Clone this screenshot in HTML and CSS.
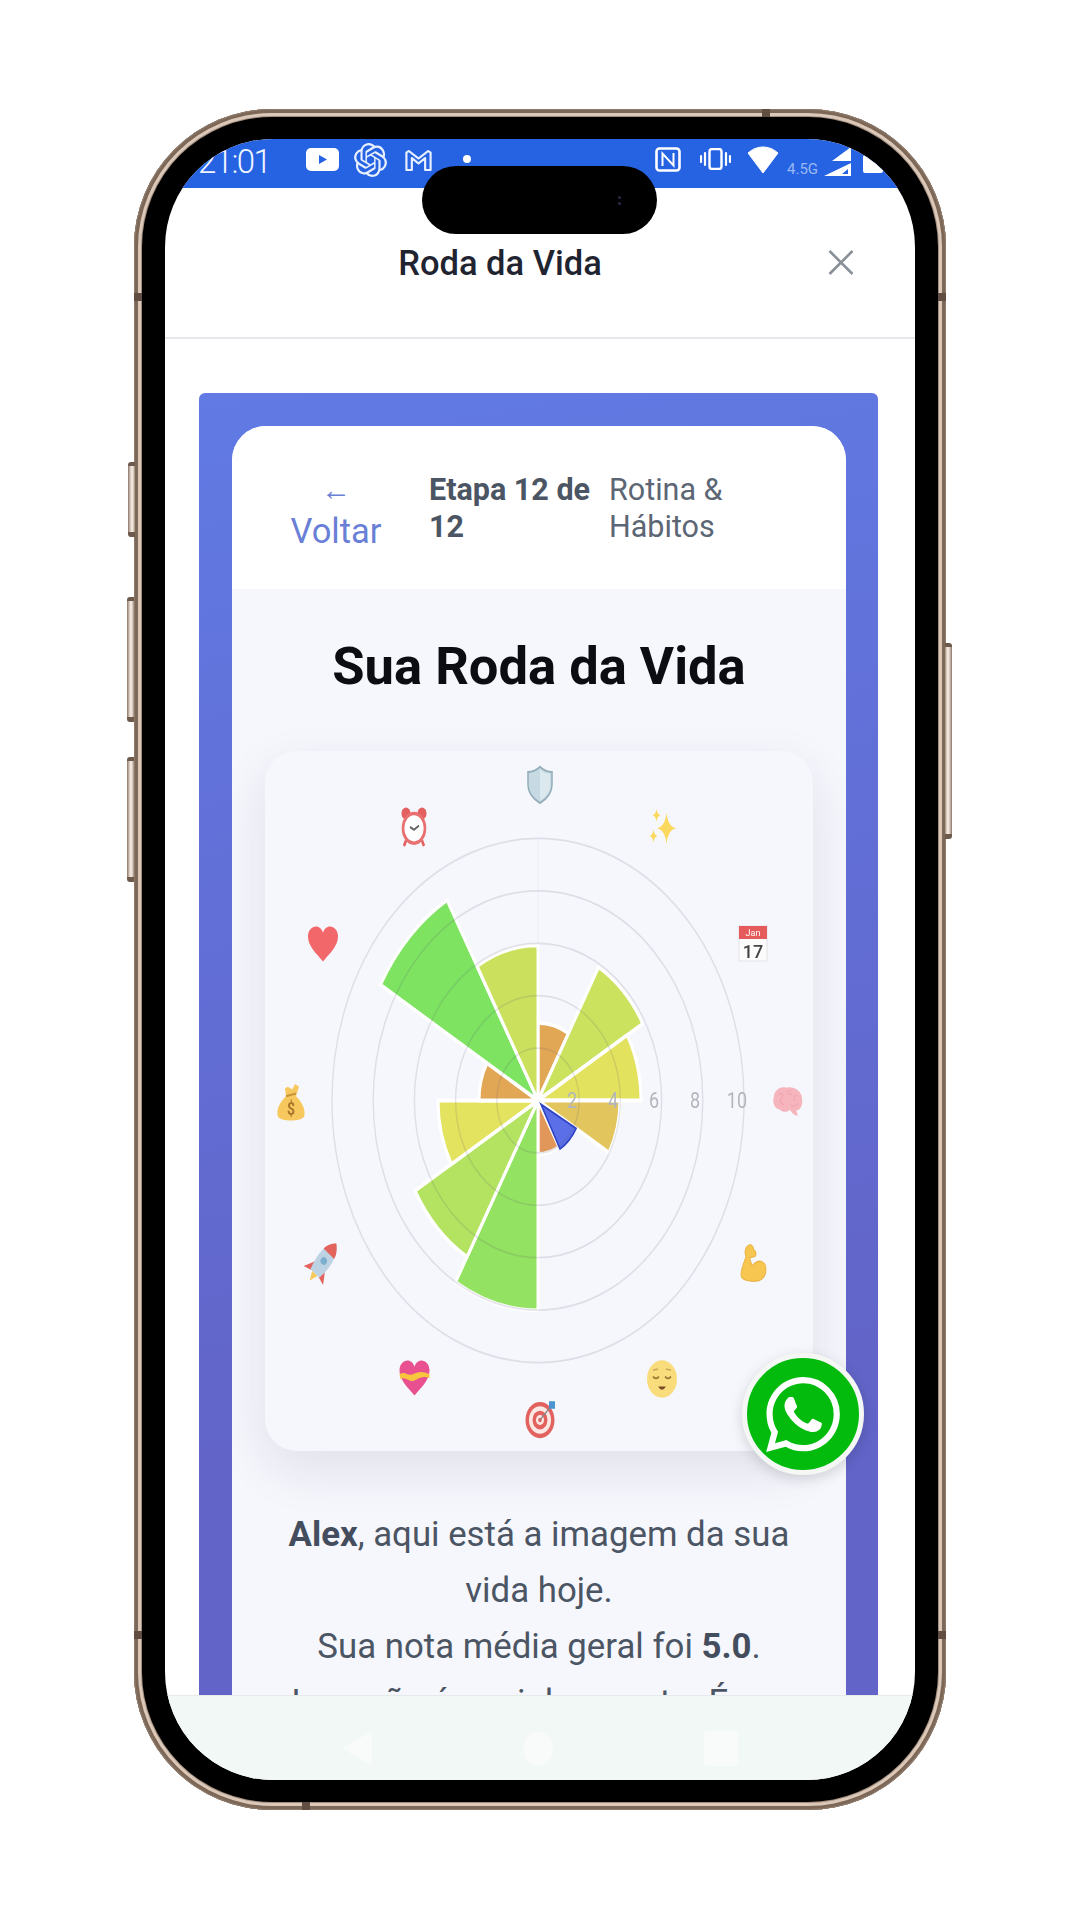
FILE: index.html
```html
<!DOCTYPE html>
<html lang="pt-BR">
<head>
    <meta charset="UTF-8">
    <meta name="viewport" content="width=device-width, initial-scale=1.0">
    <title>Roda da Vida</title>
    <link rel="stylesheet" href="styles.css">
</head>
<body>
    <div class="phone">
        <span class="side-btn btn-a"></span>
        <span class="side-btn btn-b"></span>
        <span class="side-btn btn-c"></span>
        <span class="side-btn btn-power"></span>
        <span class="band band-top"></span>
        <span class="band band-bottom"></span>
        <span class="band band-l1"></span>
        <span class="band band-l2"></span>
        <span class="band band-r1"></span>
        <span class="band band-r2"></span>

        <div class="screen">
            <div class="status-bar">
                <div class="status-left">
                    <span class="clock">21:01</span>
                    <svg class="ic-yt" viewBox="0 0 33 23"><rect width="33" height="23" rx="5" fill="#fff"/><path d="M13 7l8 4.5-8 4.5z" fill="#2563e3"/></svg>
                    <svg class="ic-gpt" viewBox="0 0 24 24" preserveAspectRatio="none"><path fill="#e8f0ff" d="M22.2819 9.8211a5.9847 5.9847 0 0 0-.5157-4.9108 6.0462 6.0462 0 0 0-6.5098-2.9A6.0651 6.0651 0 0 0 4.9807 4.1818a5.9847 5.9847 0 0 0-3.9977 2.9 6.0462 6.0462 0 0 0 .7427 7.0966 5.98 5.98 0 0 0 .511 4.9107 6.051 6.051 0 0 0 6.5146 2.9001A5.9847 5.9847 0 0 0 13.2599 24a6.0557 6.0557 0 0 0 5.7718-4.2058 5.9894 5.9894 0 0 0 3.9977-2.9001 6.0557 6.0557 0 0 0-.7475-7.0729zm-9.022 12.6081a4.4755 4.4755 0 0 1-2.8764-1.0408l.1419-.0804 4.7783-2.7582a.7948.7948 0 0 0 .3927-.6813v-6.7369l2.02 1.1686a.071.071 0 0 1 .038.052v5.5826a4.504 4.504 0 0 1-4.4945 4.4944zm-9.6607-4.1254a4.4708 4.4708 0 0 1-.5346-3.0137l.142.0852 4.783 2.7582a.7712.7712 0 0 0 .7806 0l5.8428-3.3685v2.3324a.0804.0804 0 0 1-.0332.0615L9.74 19.9502a4.4992 4.4992 0 0 1-6.1408-1.6464zM2.3408 7.8956a4.485 4.485 0 0 1 2.3655-1.9728V11.6a.7664.7664 0 0 0 .3879.6765l5.8144 3.3543-2.0201 1.1685a.0757.0757 0 0 1-.071 0l-4.8303-2.7865A4.504 4.504 0 0 1 2.3408 7.872zm16.5963 3.8558L13.1038 8.364 15.1192 7.2a.0757.0757 0 0 1 .071 0l4.8303 2.7913a4.4944 4.4944 0 0 1-.6765 8.1042v-5.6772a.79.79 0 0 0-.407-.667zm2.0107-3.0231l-.142-.0852-4.7735-2.7818a.7759.7759 0 0 0-.7854 0L9.409 9.2297V6.8974a.0662.0662 0 0 1 .0284-.0615l4.8303-2.7866a4.4992 4.4992 0 0 1 6.6802 4.66zM8.3065 12.863l-2.02-1.1638a.0804.0804 0 0 1-.038-.0567V6.0742a4.4992 4.4992 0 0 1 7.3757-3.4537l-.142.0805L8.704 5.459a.7948.7948 0 0 0-.3927.6813zm1.0976-2.3654l2.602-1.4998 2.6069 1.4998v2.9994l-2.5974 1.4997-2.6067-1.4997Z"/></svg>
                    <svg class="ic-gmail" viewBox="0 0 24 24" preserveAspectRatio="none"><path d="M2 22V4.5L4 3l8 7.5L20 3l2 1.5V22h-4.500V10L12 15.500 6.500 10v12z" fill="none" stroke="#e8f0ff" stroke-width="1.800" stroke-linejoin="round"/></svg>
                    <span class="notif-dot"></span>
                </div>
                <div class="status-right">
                    <svg class="ic-nfc" viewBox="0 0 26 25"><rect x="1.500" y="1.500" width="23" height="22" rx="3" fill="none" stroke="#fff" stroke-width="2.600"/><path d="M7.500 19V6.500L18.500 18.500V6" fill="none" stroke="#fff" stroke-width="2"/></svg>
                    <svg class="ic-vib" viewBox="0 0 31 22"><rect x="9.500" y="1" width="12" height="20" rx="2.500" fill="none" stroke="#fff" stroke-width="2.400"/><path d="M5 5v12M1 8v6M26 5v12M30 8v6" stroke="#fff" stroke-width="2.200" stroke-linecap="round"/></svg>
                    <svg class="ic-wifi" viewBox="0 0 32 28"><path d="M1 8C10 0 22 0 31 8L16 28z" fill="#fff" stroke="#fff" stroke-linejoin="round"/></svg>
                    <span class="net-label">4.5G</span>
                    <svg class="ic-signal" viewBox="0 0 27 29"><path d="M8 14L27 0v14z" fill="#fff"/><path d="M0 29L27 16v13z" fill="#fff"/><path d="M18 27l6-5v5z" fill="#2563e3"/></svg>
                    <span class="battery"></span>
                </div>
            </div>

            <header class="modal-head">
                <h2 class="modal-title">Roda da Vida</h2>
                <svg class="ic-close" viewBox="0 0 26 25"><path d="M1.500 1L24.500 24M24.500 1L1.500 24" stroke="#8a9098" stroke-width="2.600"/></svg>
            </header>

            <main class="modal-body">
                <section class="panel">
                    <div class="quiz">
                        <div class="quiz-head">
                            <a class="back-link"><span class="back-arrow">←</span>Voltar</a>
                            <strong class="step">Etapa 12 de 12</strong>
                            <span class="step-name">Rotina &amp; Hábitos</span>
                        </div>
                        <div class="quiz-body">
                            <h1>Sua Roda da Vida</h1>
                            <div class="chart-card">
                                <svg class="wheel" viewBox="0 0 548 700">
                                    <g transform="translate(273 349.500) scale(1 1.272)">
                                        <line x1="0" y1="-206" x2="0" y2="0" stroke="#eef0f7" stroke-width="1"/>
                                        <g stroke="#fff" stroke-width="3" vector-effect="non-scaling-stroke">
                                            <path fill="#e2a754" d="M0 0L0 -61A61 61 0 0 1 30.500 -52.800Z"/>
                                            <path fill="#cbe25f" d="M0 0L60.500 -104.800A121 121 0 0 1 104.800 -60.500Z"/>
                                            <path fill="#e3e25f" d="M0 0L89.200 -51.500A103 103 0 0 1 103 0Z"/>
                                            <path fill="#e2c55c" d="M0 0L82 0A82 82 0 0 1 71 41Z"/>
                                            <path fill="#e2975a" d="M0 0L21 36.400A42 42 0 0 1 0 42Z"/>
                                            <path fill="#93e261" d="M0 0L0 165A165 165 0 0 1 -82.500 142.900Z"/>
                                            <path fill="#b3e360" d="M0 0L-71 123A142 142 0 0 1 -123 71Z"/>
                                            <path fill="#e4e35f" d="M0 0L-86.600 50A100 100 0 0 1 -100 0Z"/>
                                            <path fill="#e2a754" d="M0 0L-59 0A59 59 0 0 1 -51.100 -29.500Z"/>
                                            <path fill="#7de361" d="M0 0L-157.600 -91A182 182 0 0 1 -91 -157.600Z"/>
                                            <path fill="#cbe05d" d="M0 0L-61 -105.700A122 122 0 0 1 0 -122Z"/>
                                        </g>
                                        <path fill="#5b70e8" stroke="#2f44c4" stroke-width="1.500" d="M3 3L38.100 22A44 44 0 0 1 22 38.100Z"/>
                                        <g fill="none" stroke="#5c5f78" stroke-opacity="0.16" stroke-width="1.400">
                                            <circle r="41.200"/>
                                            <circle r="82.400"/>
                                            <circle r="123.600"/>
                                            <circle r="164.800"/>
                                            <circle r="206"/>
                                        </g>
                                        <g class="axis-labels" text-anchor="middle">
                                            <text x="34" y="6">2</text>
                                            <text x="75" y="6">4</text>
                                            <text x="116" y="6">6</text>
                                            <text x="157" y="6">8</text>
                                            <text x="199" y="6">10</text>
                                        </g>
                                    </g>

                                    <!-- shield -->
                                    <g transform="translate(275 34) scale(1 1.300)">
                                        <path fill="#c7dae3" stroke="#93adb9" stroke-width="1.500" d="M0 -14C4 -11 8 -10 12 -10V0C12 7 6 11 0 14C-6 11 -12 7 -12 0V-10C-8 -10 -4 -11 0 -14Z"/>
                                        <path fill="#dbe8ee" d="M0 -12C3 -10 6 -9 10 -9V0C10 6 5 10 0 12Z"/>
                                    </g>
                                    <!-- alarm clock -->
                                    <g transform="translate(149 76) scale(1 1.350)">
                                        <circle cx="-8" cy="-10" r="4.500" fill="#e45f5f"/>
                                        <circle cx="8" cy="-10" r="4.500" fill="#e45f5f"/>
                                        <path d="M-8 10L-10 14M8 10L10 14" stroke="#e45f5f" stroke-width="2.500"/>
                                        <circle cy="1" r="11" fill="#fff" stroke="#e87070" stroke-width="2.600"/>
                                        <path d="M-4 0L0 2L5 -1" fill="none" stroke="#666" stroke-width="1.600"/>
                                    </g>
                                    <!-- sparkles -->
                                    <g transform="translate(397.500 76) scale(1 1.300)" fill="#fbd85e">
                                        <path d="M4 -11Q5.500 0 14 1Q5.500 2 4 13Q2.500 2 -6 1Q2.500 0 4 -11Z"/>
                                        <path d="M-6 -14Q-5.300 -9.500 -2 -9Q-5.300 -8.500 -6 -4Q-6.700 -8.500 -10 -9Q-6.700 -9.500 -6 -14Z"/>
                                        <path d="M-9 2Q-8.300 6.500 -5 7Q-8.300 7.500 -9 12Q-9.700 7.500 -13 7Q-9.700 6.500 -9 2Z"/>
                                    </g>
                                    <!-- calendar -->
                                    <g transform="translate(488 192)">
                                        <rect x="-14" y="-17" width="28" height="35" fill="#fbfbfb" stroke="#e2e2e6"/>
                                        <rect x="-14" y="-17" width="28" height="13" fill="#e55a5a"/>
                                        <text class="cal-month" x="0" y="-7" text-anchor="middle">Jan</text>
                                        <text class="cal-day" x="0" y="15" text-anchor="middle">17</text>
                                    </g>
                                    <!-- red heart -->
                                    <g transform="translate(58 193) scale(1 1.250)">
                                        <path fill="#f2676a" d="M0 14C-6 8 -15 2 -15 -6C-15 -11 -11 -14 -7 -14C-4 -14 -1 -12 0 -9C1 -12 4 -14 7 -14C11 -14 15 -11 15 -6C15 2 6 8 0 14Z"/>
                                    </g>
                                    <!-- brain -->
                                    <g transform="translate(523 351) scale(1 1.100)">
                                        <path fill="#f6b5bd" d="M-2 -13C-8 -15 -14 -10 -14 -5C-16 0 -14 6 -8 7C-5 10 0 9 2 7C4 11 9 13 10 12L8 8C13 7 15 2 14 -3C14 -10 6 -15 -2 -13Z"/>
                                        <path fill="none" stroke="#f0a3ae" stroke-width="1" d="M-9 -7C-6 -9 -4 -6 -6 -4C-9 -2 -8 2 -4 2M0 -11C-1 -8 2 -6 4 -7M9 -6C6 -6 5 -3 7 -1M3 3C6 5 9 3 10 1"/>
                                    </g>
                                    <!-- money bag -->
                                    <g transform="translate(26 352) scale(1 1.350)">
                                        <path fill="#f6c85e" d="M-5 -5C-12 0 -15 6 -13 10C-11 14 11 14 13 10C15 6 12 0 5 -5L8 -12L4 -14L1 -10L-3 -12L-6 -11Z"/>
                                        <path d="M-5 -5L5 -7" stroke="#c8923a" stroke-width="1.600"/>
                                        <text class="bag-sign" x="0" y="9" text-anchor="middle">$</text>
                                    </g>
                                    <!-- rocket -->
                                    <g transform="translate(58 511) scale(1.150 1.350) rotate(40)">
                                        <path fill="#e2625c" d="M-5 3L-11 13L-4 11ZM5 3L11 13L4 11Z"/>
                                        <path fill="#f7c95c" d="M-3 11L0 18L3 11Z"/>
                                        <path fill="#bdd3e4" d="M0 -18C7 -12 8 -2 5 11H-5C-8 -2 -7 -12 0 -18Z"/>
                                        <path fill="#e2625c" d="M0 -18C3.500 -15 5.500 -12 6 -8H-6C-5.500 -12 -3.500 -15 0 -18Z"/>
                                        <circle cy="-1" r="2.800" fill="#7eaecd"/>
                                    </g>
                                    <!-- flexed arm -->
                                    <g transform="translate(488 512) scale(1 1.300)">
                                        <path fill="#f6c651" stroke="#e9b03c" stroke-width="0.800" d="M-3 -14C-8 -13 -9 -8 -7 -5C-9 0 -12 4 -12 9C-12 13 -6 14 2 14C9 14 13 10 13 5C13 -1 7 -3 2 0L-1 2C-2 -1 -3 -2 -3 -4L2 -5C4 -7 3 -9 1 -10C0 -13 -1 -14 -3 -14Z"/>
                                    </g>
                                    <!-- heart with ribbon -->
                                    <g transform="translate(149.500 627) scale(1 1.250)">
                                        <path fill="#e8508f" d="M0 14C-6 8 -15 2 -15 -6C-15 -11 -11 -14 -7 -14C-4 -14 -1 -12 0 -9C1 -12 4 -14 7 -14C11 -14 15 -11 15 -6C15 2 6 8 0 14Z"/>
                                        <path fill="#f8c53f" d="M-15 -3C-9 -6 -7 -1 -2 -3C3 -5 8 -6 15 -3V0C9 -2 5 0 0 2C-5 4 -9 -2 -14 1Z"/>
                                    </g>
                                    <!-- relieved face -->
                                    <g transform="translate(397 628) scale(1 1.250)">
                                        <circle r="15" fill="#f9dd7c"/>
                                        <path d="M-9 -7L-4 -8M4 -8L9 -7" fill="none" stroke="#c9a55a" stroke-width="1.200"/>
                                        <path d="M-9 -2Q-6 1 -3 -2M3 -2Q6 1 9 -2" fill="none" stroke="#a07a3a" stroke-width="1.500"/>
                                        <path d="M-4 6Q0 11 4 6Z" fill="#7a4b2a"/>
                                    </g>
                                    <!-- target -->
                                    <g transform="translate(275 669) scale(1 1.250)">
                                        <circle r="14.500" fill="#e2625f"/>
                                        <circle r="11" fill="#fbe9e6"/>
                                        <circle r="7.500" fill="#e2625f"/>
                                        <circle r="4" fill="#fbe9e6"/>
                                        <circle r="1.800" fill="#e2625f"/>
                                        <path d="M0 0L11 -11" stroke="#888" stroke-width="1.200"/>
                                        <rect x="9" y="-15" width="6" height="6" fill="#4c94cf"/>
                                    </g>
                                </svg>
                            </div>
                            <p class="summary">
                                <b>Alex</b>, aqui está a imagem da sua vida hoje.<br>
                                Sua nota média geral foi <b>5.0</b>.<br>
                                Isso não é um julgamento. É um
                            </p>
                        </div>
                    </div>
                </section>
            </main>

            <nav class="nav-bar">
                <svg class="nav-ic" viewBox="0 0 30 35"><path d="M30 0V35L0 17.500z"/></svg>
                <svg class="nav-ic" viewBox="0 0 30 35"><ellipse cx="15" cy="17.500" rx="15" ry="17"/></svg>
                <svg class="nav-ic nav-square" viewBox="0 0 34 35"><rect width="34" height="35" rx="2"/></svg>
            </nav>

            <a class="whatsapp">
                <svg viewBox="0 0 24 24" preserveAspectRatio="none"><path fill="#fff" d="M17.472 14.382c-.297-.149-1.758-.867-2.03-.967-.273-.099-.471-.148-.67.15-.197.297-.767.966-.94 1.164-.173.199-.347.223-.644.075-.297-.15-1.255-.463-2.39-1.475-.883-.788-1.48-1.761-1.653-2.059-.173-.297-.018-.458.13-.606.134-.133.298-.347.446-.52.149-.174.198-.298.298-.497.099-.198.05-.371-.025-.52-.075-.149-.669-1.612-.916-2.207-.242-.579-.487-.5-.669-.51-.173-.008-.371-.01-.57-.01-.198 0-.52.074-.792.372-.272.297-1.04 1.016-1.04 2.479 0 1.462 1.065 2.875 1.213 3.074.149.198 2.096 3.2 5.077 4.487.709.306 1.262.489 1.694.625.712.227 1.36.195 1.871.118.571-.085 1.758-.719 2.006-1.413.248-.694.248-1.289.173-1.413-.074-.124-.272-.198-.57-.347m-5.421 7.403h-.004a9.87 9.87 0 01-5.031-1.378l-.361-.214-3.741.982.998-3.648-.235-.374a9.86 9.86 0 01-1.51-5.26c.001-5.45 4.436-9.884 9.888-9.884 2.64 0 5.122 1.03 6.988 2.898a9.825 9.825 0 012.893 6.994c-.003 5.45-4.437 9.884-9.885 9.884m8.413-18.297A11.815 11.815 0 0012.05 0C5.495 0 .16 5.335.157 11.892c0 2.096.547 4.142 1.588 5.945L.057 24l6.305-1.654a11.882 11.882 0 005.683 1.448h.005c6.554 0 11.89-5.335 11.893-11.893a11.821 11.821 0 00-3.48-8.413z"/></svg>
            </a>
        </div>

        <div class="island"><span class="island-dot"></span><span class="island-dot"></span></div>
    </div>
</body>
</html>
```

FILE: styles.css
```css
:root {
    --metal-dark: #7d6858;
    --metal-light: #dcc8b8;
    --status-blue: #2563e3;
    --panel-bg: #f6f7fd;
    --text-color: #4b5563;
}
body {
    font-family: Roboto, 'Noto Sans', sans-serif;
    margin: 0;
    background-color: #fff;
    width: 1080px;
    height: 1920px;
    overflow: hidden;
}

/* phone shell */
.phone {
    position: relative;
    box-sizing: border-box;
    width: 812px;
    height: 1701px;
    margin: 109px 0 0 134px;
    padding: 30px 31px 30px;
    background-color: #000;
    border-radius: 138px;
    box-shadow: inset 0 0 0 1px #8d7a6b, inset 0 0 0 4px var(--metal-dark), inset 0 0 0 7px var(--metal-light), inset 0 0 0 8px #a08d7e;
}
.side-btn {
    position: absolute;
    width: 7px;
    background: linear-gradient(to right, #8a7667, #efe3da 45%, #efe3da 70%, #9c8877);
    border-radius: 3px 0 0 3px;
    border-top: 4px solid #6d5a4c;
    border-bottom: 5px solid #6d5a4c;
}
.btn-a { left: -6px; top: 353px; height: 66px; }
.btn-b { left: -7px; top: 488px; height: 116px; }
.btn-c { left: -7px; top: 648px; height: 116px; }
.btn-power { right: -6px; top: 534px; height: 187px; transform: scaleX(-1); }
.band {
    position: absolute;
    background-color: #5f4e41;
}
.band-top { left: 628px; top: 0; width: 8px; height: 8px; }
.band-bottom { left: 168px; bottom: 0; width: 8px; height: 8px; }
.band-l1 { left: 0; top: 184px; width: 8px; height: 8px; }
.band-l2 { left: 0; top: 1522px; width: 8px; height: 8px; }
.band-r1 { right: 0; top: 184px; width: 8px; height: 8px; }
.band-r2 { right: 0; top: 1522px; width: 8px; height: 8px; }
.island {
    position: absolute;
    left: 288px;
    top: 57px;
    width: 235px;
    height: 68px;
    background-color: #000;
    border-radius: 34px;
    display: flex;
    flex-direction: column;
    justify-content: center;
    align-items: flex-end;
    gap: 3px;
    padding-right: 36px;
    box-sizing: border-box;
}
.island-dot {
    width: 3px;
    height: 3px;
    border-radius: 50%;
    background-color: #2a2c4a;
}

/* screen */
.screen {
    position: relative;
    height: 100%;
    display: flex;
    flex-direction: column;
    background-color: #fff;
    border-radius: 108px;
    overflow: hidden;
}
.status-bar {
    flex: 0 0 49px;
    display: flex;
    justify-content: space-between;
    align-items: flex-start;
    background-color: var(--status-blue);
    color: #f0f5ff;
    padding: 0 32px 0 33px;
}
.status-left, .status-right {
    display: flex;
    align-items: flex-start;
}
.clock {
    width: 69px;
    margin-top: 4px;
    font-size: 33px;
    font-weight: 300;
    line-height: 38px;
    letter-spacing: -1.600px;
    white-space: nowrap;
}
.ic-yt { width: 33px; height: 23px; margin: 9px 0 0 39px; }
.ic-gpt { width: 33px; height: 34px; margin: 4px 0 0 15px; }
.ic-gmail { width: 29px; height: 24px; margin: 9px 0 0 17px; }
.notif-dot {
    width: 8px;
    height: 8px;
    margin: 16px 0 0 30px;
    border-radius: 50%;
    background-color: #fff;
}
.ic-nfc { width: 26px; height: 25px; margin-top: 8px; }
.ic-vib { width: 31px; height: 22px; margin: 9px 0 0 19px; }
.ic-wifi { width: 32px; height: 28px; margin: 6px 0 0 16px; }
.net-label {
    width: 33px;
    margin: 21px 0 0 8px;
    font-size: 15px;
    line-height: 18px;
    color: rgba(255, 255, 255, 0.55);
}
.ic-signal { width: 27px; height: 29px; margin: 8px 0 0 4px; }
.battery {
    width: 20px;
    height: 18px;
    margin: 16px 0 0 12px;
    background-color: #fff;
    border-radius: 2px;
}

/* modal */
.modal-head {
    flex: 0 0 151px;
    box-sizing: border-box;
    display: flex;
    align-items: center;
    padding: 0 61px 0 7px;
    border-bottom: 2px solid #e6e8ec;
}
.modal-title {
    flex: 1;
    margin: 0;
    text-align: center;
    font-size: 34.500px;
    font-weight: 500;
    color: #1f2430;
}
.ic-close { width: 26px; height: 25px; }
.modal-body {
    flex: 1;
    min-height: 0;
    overflow: hidden;
    padding: 54px 37px 0 34px;
}
.panel {
    padding: 33px 32px 80px 33px;
    border-radius: 6px;
    background: linear-gradient(170deg, #617ae4, #6264c8 70%);
}
.quiz {
    border-radius: 34px;
    overflow: hidden;
    background-color: var(--panel-bg);
}
.quiz-head {
    height: 163px;
    box-sizing: border-box;
    display: flex;
    align-items: center;
    padding-left: 56px;
    background-color: #fff;
}
.back-link {
    width: 96px;
    margin: 8px 45px 0 0;
    text-align: center;
    font-size: 34.500px;
    line-height: 38px;
    color: #6a7fd6;
}
.back-arrow {
    display: block;
    margin-bottom: 6px;
    font-size: 30px;
    line-height: 32px;
}
.step {
    width: 180px;
    font-size: 30.500px;
    line-height: 37px;
    font-weight: 700;
    color: #4b5563;
}
.step-name {
    width: 140px;
    font-size: 30.500px;
    line-height: 37px;
    color: #5c6675;
}
.quiz-body {
    padding: 47px 33px 0;
}
h1 {
    margin: 0 0 55px;
    text-align: center;
    font-size: 52.500px;
    line-height: 60px;
    font-weight: 700;
    color: #0c0d12;
}
.chart-card {
    height: 700px;
    border-radius: 32px;
    background-color: var(--panel-bg);
    box-shadow: 0 18px 50px rgba(30, 30, 60, 0.1);
}
.wheel {
    display: block;
    width: 548px;
    height: 700px;
    filter: blur(0.5px);
}
.axis-labels text {
    font-family: Roboto, sans-serif;
    font-size: 18px;
    fill: #b3b5bd;
}
.cal-month {
    font-family: Roboto, sans-serif;
    font-size: 9px;
    fill: #fff;
}
.cal-day {
    font-family: Roboto, sans-serif;
    font-size: 18px;
    font-weight: 500;
    fill: #444;
}
.bag-sign {
    font-family: Roboto, sans-serif;
    font-size: 14px;
    font-weight: 700;
    fill: #a8752c;
}
.summary {
    margin: 55px 0 0;
    text-align: center;
    font-size: 34.800px;
    line-height: 56px;
    color: var(--text-color);
}
.summary b {
    color: #434d5e;
}

.nav-bar {
    flex: 0 0 85px;
    box-sizing: border-box;
    display: flex;
    gap: 151px;
    padding: 35px 0 0 177px;
    border-top: 1px solid #e5ebe9;
    background-color: #f1f8f6;
}
.nav-ic {
    width: 30px;
    height: 35px;
    fill: #f8fbfa;
}
.nav-square { width: 34px; }

.whatsapp {
    position: absolute;
    left: 577px;
    top: 1214px;
    width: 122px;
    height: 122px;
    box-sizing: border-box;
    display: flex;
    align-items: center;
    justify-content: center;
    border: 5px solid #f4f7f4;
    border-radius: 50%;
    background-color: #02bb0d;
    box-shadow: 0 4px 14px rgba(0, 0, 0, 0.15);
}
.whatsapp svg {
    width: 74px;
    height: 75px;
}
```
